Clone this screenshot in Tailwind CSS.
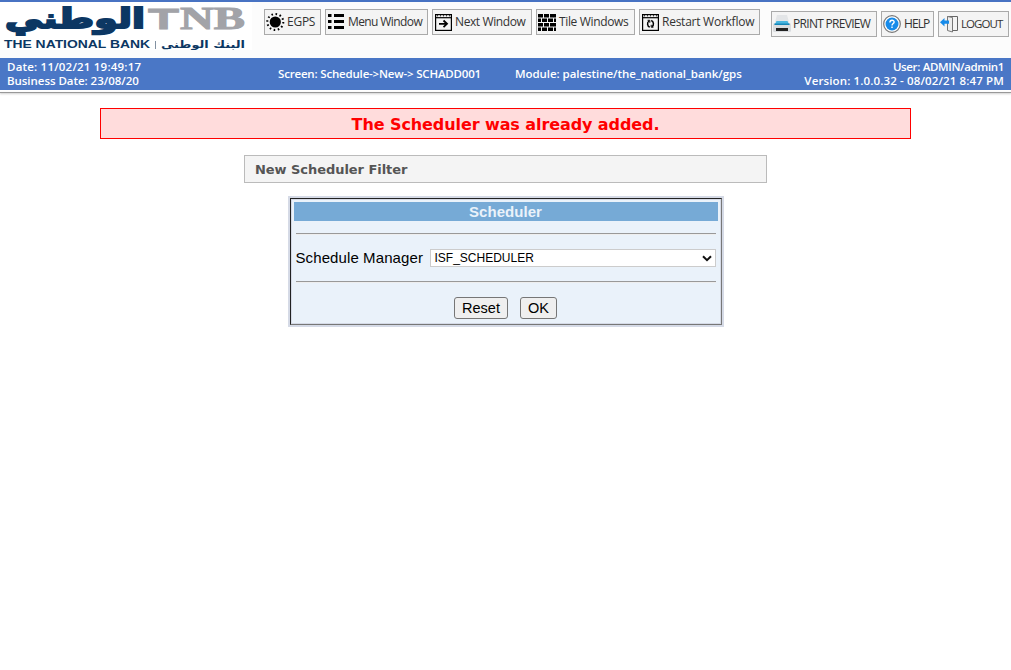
<!DOCTYPE html>
<html lang="en">
<head>
<meta charset="utf-8">
<title>New Scheduler Filter</title>
<script src="https://cdn.jsdelivr.net/npm/@tailwindcss/browser@4"></script>
</head>
<body class="bg-white font-['Liberation_Sans',sans-serif] text-black h-[670px] overflow-hidden">
<header class="h-[58px] bg-[#fcfcfc] border-t-2 border-[#4873c3] flex items-start font-['Open_Sans',sans-serif] text-[12px] text-[#333]">
  <svg class="w-[252px] h-[48px] shrink-0 bg-white" viewBox="0 2 252 48">
    <g fill="#0c3763">
      <text x="5" y="28" direction="ltr" font-family="DejaVu Sans" font-weight="700" font-size="27" stroke="#0c3763" stroke-width="1.9" textLength="140" lengthAdjust="spacingAndGlyphs">الوطني</text>
      <text x="4" y="48" font-family="Liberation Sans" font-weight="700" font-size="10.5" textLength="146" lengthAdjust="spacingAndGlyphs">THE NATIONAL BANK</text>
      <text x="161" y="47.5" font-family="DejaVu Sans" font-weight="700" font-size="10.5" textLength="84" lengthAdjust="spacingAndGlyphs">البنك الوطني</text>
    </g>
    <path d="M155.5 41v8" stroke="#8291a1"/>
    <g fill="#a2a3a8" stroke="#a2a3a8" font-weight="700">
      <text x="148" y="28.5" stroke-width=".8" font-family="Liberation Sans" font-size="30" textLength="31" lengthAdjust="spacingAndGlyphs">T</text>
      <text x="180" y="28.5" stroke-width="1" font-family="Liberation Serif" font-size="31.5" textLength="65" lengthAdjust="spacingAndGlyphs">NB</text>
    </g>
  </svg>
  <nav class="flex gap-1 ml-3 pt-[7px]">
    <div class="h-[26px] w-[57px] border border-[#aaa] bg-[#f4f4f4] flex items-center pl-[2px] gap-1 whitespace-nowrap">
      <svg class="w-4 h-[18px] shrink-0 overflow-visible" viewBox="0 0 16 18"><circle cx="8.3" cy="9" r="5.6"/><circle cx="8.3" cy="9" r="8" fill="none" stroke="#000" stroke-width="2" stroke-dasharray="1.6 2.589"/></svg>
      <span class="tracking-[-0.25px]">EGPS</span></div>
    <div class="h-[26px] w-[103px] border border-[#aaa] bg-[#f4f4f4] flex items-center pl-[2px] gap-1 whitespace-nowrap">
      <svg class="w-4 h-4 shrink-0" viewBox="0 0 16 16" fill="none" stroke="#000" stroke-width="3"><path d="M0 1.5h3.5M6 1.5h10M0 7.5h3.5M6 7.5h10M0 13.5h3.5M6 13.5h10"/></svg>
      <span class="tracking-[-0.6px]">Menu Window</span></div>
    <div class="h-[26px] w-[100px] border border-[#aaa] bg-[#f4f4f4] flex items-center pl-[2px] gap-[3px] whitespace-nowrap">
      <svg class="w-[17px] h-[17px] shrink-0" viewBox="0 0 17 17" fill="none" stroke="#000"><rect x=".6" y=".6" width="15.8" height="15.8" stroke-width="1.2"/><path d="M1 3.7h15" stroke-width="1.2"/><path d="M2 1.8h13" stroke-width="1" stroke-dasharray="1 2"/><path d="M4 9.8h8M8.5 6.5l3.5 3.3-3.5 3.3" stroke-width="1.8"/></svg>
      <span class="tracking-[-0.4px]">Next Window</span></div>
    <div class="h-[26px] w-[99px] border border-[#aaa] bg-[#f4f4f4] flex items-center pl-[1px] gap-[3px] whitespace-nowrap">
      <svg class="w-[18px] h-[17px] shrink-0" viewBox="0 0 18 17"><path d="M0 0h5v3.5H0zM6 0h5v3.5H6zM12 0h6v3.5h-6zM0 4.5h3v3.5H0zM4 4.5h5v3.5H4zM10 4.5h5v3.5h-5zM16 4.5h2v3.5h-2zM0 9h5v3.5H0zM6 9h5v3.5H6zM12 9h6v3.5h-6zM0 13.5h3V17H0zM4 13.5h5V17H4zM10 13.5h5V17h-5zM16 13.5h2V17h-2z"/></svg>
      <span class="tracking-[-0.35px]">Tile Windows</span></div>
    <div class="h-[26px] w-[121px] border border-[#aaa] bg-[#f4f4f4] flex items-center pl-[2px] gap-[3px] whitespace-nowrap">
      <svg class="w-[17px] h-[17px] shrink-0" viewBox="0 0 17 17" fill="none" stroke="#000"><rect x=".6" y=".6" width="15.8" height="15.8" stroke-width="1.2"/><path d="M1 3.7h15" stroke-width="1.2"/><path d="M2 1.8h13" stroke-dasharray="1 2"/><path d="M7.8 13.1C5.2 12.3 4.8 8.5 7 7M9.2 6.5c2.6.8 3 4.6.8 6.1" stroke-width="1.5"/><path d="M5.6 6.3h2.2v2.4M11.4 13.2H9.2v-2.4" stroke-width="1"/></svg>
      <span class="tracking-[-0.25px]">Restart Workflow</span></div>
  </nav>
  <nav class="flex gap-1 ml-[11px] pt-[9px]">
    <div class="h-[26px] w-[106px] border border-[#aaa] bg-[#f4f4f4] flex items-center pl-[1px] gap-[2px] whitespace-nowrap">
      <svg class="w-[18px] h-[18px] shrink-0" viewBox="0 0 18 18"><path d="M4 0h10l2 7H2z" fill="#e3e5e7"/><rect y="8" width="18" height="9" rx="1.5" fill="#d9dcdf"/><path d="M3.5 6h11l2 4H1.5z" fill="#48b5df"/><path d="M1.5 8.5h15V10h-15z" fill="#1686b8"/><path d="M3 13h12v3H3z" fill="#222"/></svg>
      <span class="tracking-[-0.7px]">PRINT PREVIEW</span></div>
    <div class="h-[26px] w-[53px] border border-[#aaa] bg-[#f4f4f4] flex items-center pl-[1px] gap-[3px] whitespace-nowrap">
      <svg class="w-[18px] h-[18px] shrink-0" viewBox="0 0 18 18"><circle cx="9" cy="9" r="8.3" fill="#fff" stroke="#777" stroke-width="1.2"/><circle cx="9" cy="9" r="6.5" fill="#168bea"/><path d="M6.9 7.5c0-3 4.3-2.8 4.2-.4C11 8.5 9 8.6 9 10.5M9 11.6v1.5" fill="none" stroke="#fff" stroke-width="1.4"/></svg>
      <span class="tracking-[-0.9px]">HELP</span></div>
    <div class="h-[26px] w-[71px] border border-[#aaa] bg-[#f4f4f4] flex items-center pl-[1px] gap-[3px] whitespace-nowrap">
      <svg class="w-[18px] h-[18px] shrink-0" viewBox="0 0 18 18"><path d="M7.5 6V1.5h10v14h-5" fill="none" stroke="#666"/><path d="M7.5 1.5l5 1v14.5l-5-1.5z" fill="#eee" stroke="#777"/><path d="M0 7.3l4.5-4.3v2.6H9v3.2H4.5v2.8z" fill="#168bea"/></svg>
      <span class="text-[11.5px] tracking-[-0.95px]">LOGOUT</span></div>
  </nav>
</header>
<section class="h-8 bg-[#4a77c6] flex items-center px-[7px] text-white font-['Open_Sans',sans-serif] font-semibold text-[11.5px] leading-[14px] whitespace-nowrap">
  <div class="w-[271px] shrink-0"><div class="w-fit"><span class="tracking-[0.2px]">Date: 11/02/21 19:49:17</span></div><div class="w-fit"><span class="tracking-[-0.04px]">Business Date: 23/08/20</span></div></div>
  <div class="w-[237px] shrink-0"><span class="tracking-[-0.18px]">Screen: Schedule-&gt;New-&gt; SCHADD001</span></div>
  <div class="w-[240px] shrink-0"><span class="tracking-[-0.06px]">Module: palestine/the_national_bank/gps</span></div>
  <div class="ml-auto flex flex-col items-end"><div><span class="tracking-[-0.35px]">User: ADMIN/admin1</span></div><div><span class="tracking-[0.13px]">Version: 1.0.0.32 - 08/02/21 8:47 PM</span></div></div>
</section>
<div class="mt-[2px] h-px bg-[#999] shadow-[0_1px_2px_#bbb]"></div>
<main class="flex flex-col items-center">
  <div class="mt-[15px] w-[811px] h-[31px] border border-[#f00] bg-[#ffdcdc] flex items-center justify-center pt-[2px] text-[#f00] font-['DejaVu_Sans',sans-serif] font-bold text-[16px]"><span class="tracking-[-0.09px]">The Scheduler was already added.</span></div>
  <div class="mt-4 w-[523px] h-[28px] border border-[#bbb] bg-[#f4f4f4] flex items-center pl-[10px] pt-[2px] text-[#555] font-['DejaVu_Sans',sans-serif] font-bold text-[13px]"><span class="tracking-[-0.05px]">New Scheduler Filter</span></div>
  <div class="mt-[13px] w-[436px] h-[131px] border-2 border-[#d5dae6] bg-[#eaf2fa]">
    <div class="h-full border border-t-[#222] border-l-[#222] border-r-[#777] border-b-[#777]">
      <div class="h-full border border-[#d5dae6] px-[2px] pt-[2px]">
        <h1 class="h-[19px] bg-[#76aad6] text-[#eaf2fa] font-bold text-[15px] leading-[19px] text-center"><span class="tracking-[0.05px]">Scheduler</span></h1>
        <div class="px-[2px]">
          <hr class="mt-3 h-[2px] border-t border-b border-t-[#999] border-b-[#eee]">
          <div class="mt-[14px] h-[18px] flex items-center justify-between whitespace-nowrap text-[15px]"><span class="tracking-[0.1px]">Schedule Manager</span>
            <div class="w-[286px] h-[18px] border border-[#ccc] bg-white flex items-center justify-between pl-1 pr-[3px] text-[12px]"><span>ISF_SCHEDULER</span><svg class="w-[10px] h-[7px]" viewBox="0 0 10 7"><path d="M1 1.2l4 4 4-4" fill="none" stroke="#111" stroke-width="2"/></svg></div>
          </div>
          <hr class="mt-[14px] h-[2px] border-t border-b border-t-[#999] border-b-[#eee]">
          <div class="mt-[14px] flex justify-center gap-3 text-[14.5px]">
            <button class="w-[54px] h-[22px] border border-[#767676] rounded-[3px] bg-[#efefef]">Reset</button>
            <button class="w-[37px] h-[22px] border border-[#767676] rounded-[3px] bg-[#efefef]">OK</button>
          </div>
        </div>
      </div>
    </div>
  </div>
</main>
</body>
</html>
